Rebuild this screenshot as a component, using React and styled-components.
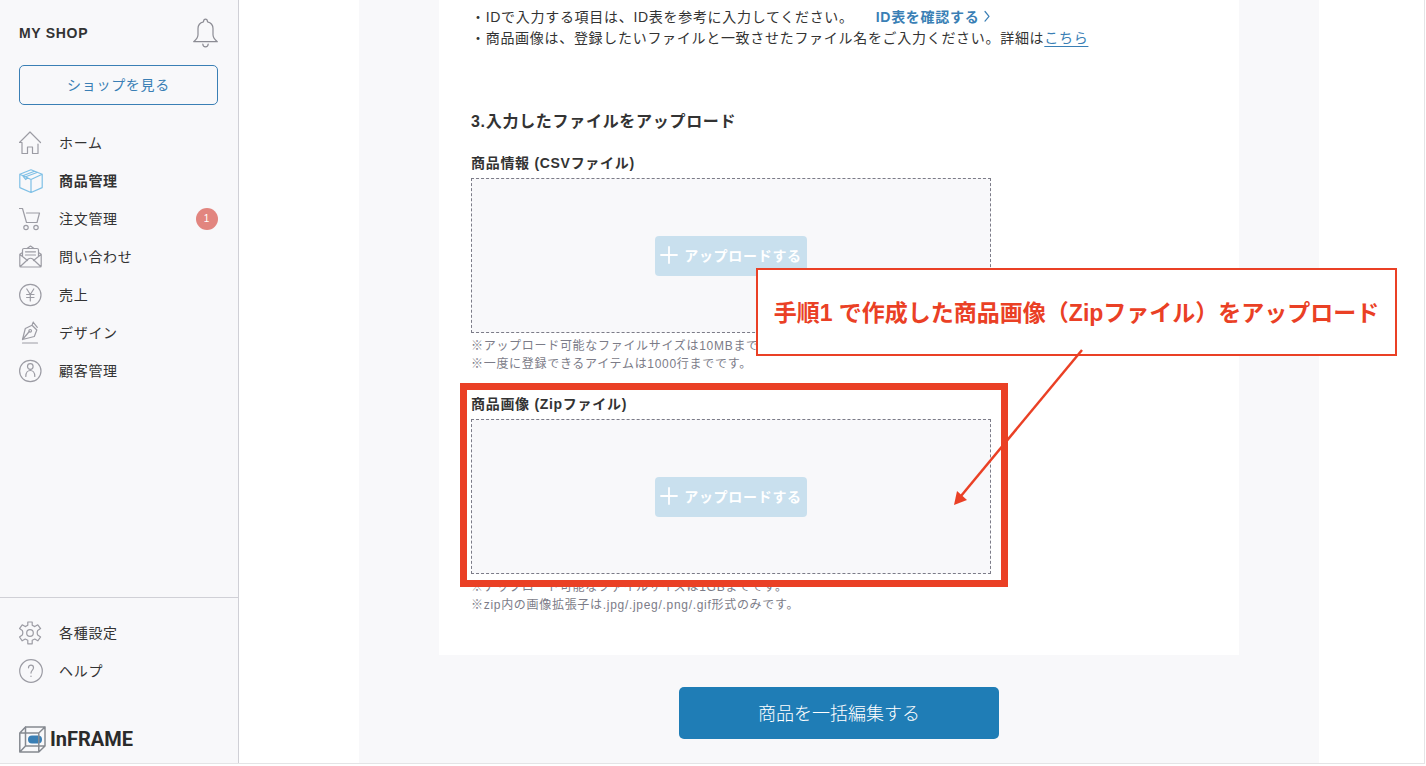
import React from 'react';
import styled, { createGlobalStyle } from 'styled-components';

const GlobalStyle = createGlobalStyle`
  * {
    box-sizing: border-box;
  }

  body {
    margin: 0;
    background-color: white;
    color: #333333;
    font-family: "Liberation Sans", "Noto Sans CJK JP", sans-serif;
    font-size: 14px;
    line-height: 21px;
    letter-spacing: 0.05em;
  }

  h1, h2, h3, p, ul {
    margin: 0;
    padding: 0;
  }

  button {
    font-family: inherit;
    cursor: pointer;
  }
`;

const Page = styled.div`
  display: flex;
  min-height: calc(100vh - 2px);
  margin: 0 1px 2px 0;
  border-right: 1px solid #e4e4e6;
  border-bottom: 1px solid #e4e4e6;
  overflow: hidden;
`;

const Sidebar = styled.aside`
  flex: none;
  width: 239px;
  display: flex;
  flex-direction: column;
  border-right: 1px solid #d0d0d6;
  background-color: #f8f8fa;
`;

const SidebarHeader = styled.div`
  display: flex;
  align-items: center;
  justify-content: space-between;
  padding: 18px 20px 0 19px;
`;

const ShopName = styled.h1`
  font-size: 14px;
  font-weight: bold;
`;

const BellButton = styled.button`
  display: flex;
  padding: 0;
  border: none;
  background: none;
`;

const ShopLink = styled.a`
  height: 40px;
  margin: 17px 20px 19px 19px;
  border: 1px solid #3a7fb5;
  border-radius: 5px;
  color: #3a7fb5;
  line-height: 38px;
  text-align: center;
  text-decoration: none;
`;

const NavList = styled.ul`
  list-style: none;
`;

const NavLink = styled.a`
  height: 38px;
  display: flex;
  align-items: center;
  padding: 0 20px 0 19px;
  color: #333333;
  font-weight: ${({ $active }) => ($active ? 'bold' : 'normal')};
  text-decoration: none;
`;

const NavIcon = styled.span`
  width: 40px;
  display: flex;
`;

const Badge = styled.span`
  width: 22px;
  height: 22px;
  margin-left: auto;
  border-radius: 50%;
  background-color: #e2857f;
  color: white;
  font-size: 10px;
  line-height: 22px;
  text-align: center;
`;

const SidebarFooter = styled.div`
  margin-top: auto;
  padding: 16px 0 10px;
  border-top: 1px solid #d0d0d6;
`;

const Logo = styled.a`
  display: flex;
  align-items: center;
  gap: 4px;
  padding: 36px 20px 0 19px;
  color: #2b2b2b;
  font-family: Roboto, sans-serif;
  font-size: 20px;
  font-weight: bold;
  line-height: 27px;
  letter-spacing: normal;
  text-decoration: none;
`;

const Main = styled.main`
  flex: 1;
  display: flex;
  padding: 0 105px 0 120px;
`;

const Content = styled.div`
  flex: 1;
  padding: 0 80px 24px;
  background-color: #f8f8fa;
`;

const Card = styled.section`
  padding: 7px 32px 41px;
  background-color: white;
`;

const GuideLink = styled.a`
  margin-left: 22px;
  color: #3a7fb5;
  font-weight: bold;
  text-decoration: none;

  svg {
    margin-left: 2px;
  }
`;

const TextLink = styled.a`
  color: #3a7fb5;
  text-underline-offset: 3px;
`;

const StepTitle = styled.h2`
  padding: 61px 0 19px;
  font-size: 16px;
  line-height: 24px;
`;

const UploadArea = styled.div`
  position: relative;
  max-width: 520px;
  display: flex;
  flex-direction: column;
  gap: 21px;
`;

const UploadTitle = styled.h3`
  font-size: 14px;
`;

const DropZone = styled.div`
  height: 155px;
  display: flex;
  align-items: center;
  justify-content: center;
  margin: 4px 0;
  border: 1px dashed #7c7c88;
  background-color: #f8f8fa;
`;

const UploadButton = styled.button`
  height: 40px;
  display: flex;
  align-items: center;
  gap: 6px;
  padding: 0 5px 2px;
  border: none;
  border-radius: 4px;
  background-color: #c9e0ee;
  color: white;
  font-size: 14px;
  font-weight: bold;
  letter-spacing: inherit;
`;

const Note = styled.p`
  color: #7c7c88;
  font-size: 12px;
  line-height: 18px;
`;

const Highlight = styled.div`
  position: absolute;
  top: 230px;
  right: -17px;
  bottom: 27px;
  left: -11px;
  border: 7px solid #ea4025;
  pointer-events: none;
`;

const Callout = styled.p`
  position: absolute;
  top: 115px;
  left: 285px;
  width: 641px;
  padding-top: 2px;
  border: 2px solid #ea4025;
  background-color: white;
  color: #ea4025;
  font-size: 23px;
  font-weight: bold;
  line-height: 82px;
  letter-spacing: normal;
  text-align: center;
  white-space: nowrap;
`;

const Arrow = styled.svg`
  position: absolute;
  top: 193px;
  left: 479px;
  pointer-events: none;
`;

const SubmitButton = styled.button`
  width: 320px;
  height: 52px;
  display: block;
  margin: 32px auto 0;
  padding: 0 0 3px;
  border: none;
  border-radius: 5px;
  background-color: #1f7db6;
  color: white;
  font-size: 18px;
  font-weight: 300;
`;

const Icon = ({ width = 24, height = 24, color = '#9c9ca4', children }) => (
  <svg
    width={width}
    height={height}
    viewBox={`0 0 ${width} ${height}`}
    fill="none"
    stroke={color}
    strokeWidth="1.2"
    strokeLinecap="round"
    strokeLinejoin="round"
    aria-hidden="true"
  >
    {children}
  </svg>
);

const BellIcon = () => (
  <Icon width={25} height={30} color="#8c8c94">
    <path d="M.7 23.700h23.600c-2.800-2.400-4.300-4.200-4.300-7v-6.200c0-3.500-2.200-5.900-5.500-6.700c-.2-3.600-3.800-3.600-4 0c-3.300.8-5.500 3.200-5.500 6.700v6.200c0 2.800-1.500 4.600-4.300 7z" />
    <path d="M9.800 26c.2 3.800 5.200 3.800 5.400 0" />
  </Icon>
);

const HomeIcon = () => (
  <Icon>
    <path d="M3 22.500v-11h-2.500L11 1l10.500 10.500M3 22.500h5.500v-6.500h5v6.500h5.500v-9.500" />
  </Icon>
);

const BoxIcon = () => (
  <Icon color="#7fc0e6">
    <path d="M12 .8l11.200 4.400v13.400l-11.200 4.900l-11.200-4.900v-13.400zM.8 5.200l11.200 5.300l11.200-5.300M12 10.500v13M15.500 2.300l-11.700 4.500l2.800 3.700l2-1.800l-2-1l12-4.400" />
  </Icon>
);

const CartIcon = () => (
  <Icon>
    <path d="M.5 1.500h3l4 14h10.500l2.500-9.500h-13" />
    <circle cx="7" cy="20.500" r="2.200" />
    <circle cx="17" cy="20.500" r="2.200" />
  </Icon>
);

const MailIcon = () => (
  <Icon>
    <path d="M3.500 7.500l-2.700 1.800v11.700q0 1 1 1h19.400q1 0 1-1v-11.700l-2.700-1.800M8 3.500l3.500-2.500l3.500 2.500M3.500 11.500v-6.500q0-1.500 1.500-1.500h13q1.500 0 1.500 1.500v6.500M1 9.500l7.500 6M22 9.500l-7.500 6M1.300 21.500l8-7.500q2.200-1.500 4.400 0l8 7.500M6.500 6.800h10M6.500 10h10" />
  </Icon>
);

const YenIcon = () => (
  <Icon>
    <circle cx="11.300" cy="12" r="10.700" />
    <path d="M7.800 6l3.500 5.500l3.500-5.500M11.300 11.500v6.500M7.600 11.500h7.400M7.600 14.500h7.400" />
  </Icon>
);

const PenIcon = () => (
  <Icon>
    <path d="M3.500 18.500l2.800-11l6.700-3.200l4.800 4.700l-2.500 6.500zM3.500 18.500l6.800-8M13 4.300l1.300-3.300M14.300 1.300l4 5M3.500 22h15" />
    <circle cx="11.200" cy="9.800" r="1.300" />
  </Icon>
);

const CustomerIcon = () => (
  <Icon>
    <circle cx="11.300" cy="12" r="10.700" />
    <circle cx="11.300" cy="7.500" r="2.800" />
    <path d="M6.800 17.500c0-8 9-8 9 0" />
  </Icon>
);

const GearIcon = () => (
  <Icon>
    <path d="M8.800 1h4.400v3.300l2.600 1.300l3-1.800l2.800 3.800l-2.900 1.900q-1 2.300 0 4.600l2.900 1.900l-2.800 3.800l-3-1.800l-2.600 1.300v3.500h-4.400v-3.500l-2.600-1.300l-3 1.800l-2.700-3.800l2.800-1.900q1-2.300 0-4.600l-2.800-1.900l2.700-3.800l3 1.800l2.600-1.300z" />
    <circle cx="11" cy="12" r="3.300" />
  </Icon>
);

const HelpIcon = () => (
  <Icon>
    <circle cx="12" cy="12" r="11.300" />
    <path d="M9.500 8.800c0-3.600 5-3.600 5 0c0 2.200-2.500 2.500-2.500 5.300M12 17v.5" />
  </Icon>
);

const LogoIcon = () => (
  <Icon width={27} height={27} color="#858990">
    <rect x="9" y="9.500" width="14" height="8" rx="4" fill="#3a7fb5" stroke="none" />
    <path d="M.8 7h19v19h-19zM6.500 1h19.500v19h-19.500zM.8 7l5.700-6M19.800 7l6.200-6M.8 26l5.700-6M19.800 26l6.200-6" strokeWidth="1.500" />
  </Icon>
);

const PlusIcon = () => (
  <Icon width={18} height={18} color="white">
    <path d="M9 1v16M1 9h16" strokeWidth="1.800" />
  </Icon>
);

const ChevronIcon = () => (
  <Icon width={10} height={12} color="#3a7fb5">
    <path d="M4 1.500l4 4.800l-4 4.800" />
  </Icon>
);

const NAV_ITEMS = [
  { label: 'ホーム', icon: HomeIcon },
  { label: '商品管理', icon: BoxIcon, active: true },
  { label: '注文管理', icon: CartIcon, badge: 1 },
  { label: '問い合わせ', icon: MailIcon },
  { label: '売上', icon: YenIcon },
  { label: 'デザイン', icon: PenIcon },
  { label: '顧客管理', icon: CustomerIcon },
];

const FOOTER_ITEMS = [
  { label: '各種設定', icon: GearIcon },
  { label: 'ヘルプ', icon: HelpIcon },
];

const UPLOADS = [
  {
    title: '商品情報 (CSVファイル)',
    notes: [
      '※アップロード可能なファイルサイズは10MBまでです。',
      '※一度に登録できるアイテムは1000行までです。',
    ],
  },
  {
    title: '商品画像 (Zipファイル)',
    notes: [
      '※アップロード可能なファイルサイズは1GBまでです。',
      '※zip内の画像拡張子は.jpg/.jpeg/.png/.gif形式のみです。',
    ],
  },
];

const Nav = ({ items }) => (
  <NavList>
    {items.map(({ label, icon: ItemIcon, active, badge }) => (
      <li key={label}>
        <NavLink href="#" $active={active}>
          <NavIcon>
            <ItemIcon />
          </NavIcon>
          {label}
          {badge && <Badge>{badge}</Badge>}
        </NavLink>
      </li>
    ))}
  </NavList>
);

const Upload = ({ title, notes }) => (
  <div>
    <UploadTitle>{title}</UploadTitle>
    <DropZone>
      <UploadButton type="button">
        <PlusIcon />
        アップロードする
      </UploadButton>
    </DropZone>
    {notes.map((note) => (
      <Note key={note}>{note}</Note>
    ))}
  </div>
);

const App = () => (
  <>
    <GlobalStyle />
    <Page>
      <Sidebar>
        <SidebarHeader>
          <ShopName>MY SHOP</ShopName>
          <BellButton type="button" aria-label="お知らせ">
            <BellIcon />
          </BellButton>
        </SidebarHeader>
        <ShopLink href="#">ショップを見る</ShopLink>
        <Nav items={NAV_ITEMS} />
        <SidebarFooter>
          <Nav items={FOOTER_ITEMS} />
          <Logo href="#">
            <LogoIcon />
            InFRAME
          </Logo>
        </SidebarFooter>
      </Sidebar>
      <Main>
        <Content>
          <Card>
            <p>
              ・IDで入力する項目は、ID表を参考に入力してください。
              <GuideLink href="#">
                ID表を確認する
                <ChevronIcon />
              </GuideLink>
            </p>
            <p>
              ・商品画像は、登録したいファイルと一致させたファイル名をご入力ください。詳細は
              <TextLink href="#">こちら</TextLink>
            </p>
            <StepTitle>3.入力したファイルをアップロード</StepTitle>
            <UploadArea>
              {UPLOADS.map((upload) => (
                <Upload key={upload.title} {...upload} />
              ))}
              <Highlight />
              <Callout>手順1 で作成した商品画像（Zipファイル）をアップロード</Callout>
              <Arrow width="140" height="164" viewBox="0 0 140 164" aria-hidden="true">
                <path d="M132 4L11 150" stroke="#ea4025" strokeWidth="2.500" />
                <path d="M4 159L7 145L17 154z" fill="#ea4025" />
              </Arrow>
            </UploadArea>
          </Card>
          <SubmitButton type="button">商品を一括編集する</SubmitButton>
        </Content>
      </Main>
    </Page>
  </>
);

export default App;
